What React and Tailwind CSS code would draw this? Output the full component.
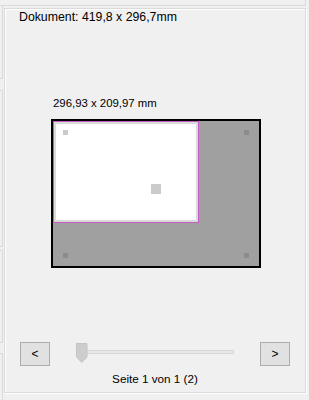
import React from 'react';

const font = { fontFamily: '"Liberation Sans", Arial, sans-serif' };

const LeftStrip = () => (
  <div className="w-[4px] flex flex-col shrink-0">
    <div className="w-[3px] h-[73px] border-r border-b border-[#dadada]" />
    <div className="h-[11px]" />
    <div className="w-[3px] h-[157px] border-r border-b border-t border-[#dadada]" />
    <div className="h-[3px]" />
    <div className="w-[3px] h-[93px] border-r border-b border-t border-[#dadada]" />
    <div className="h-[10px]" />
    <div className="w-[3px] h-[60px] border-r border-t border-[#dadada]" />
  </div>
);

const Preview = () => (
  <div className="relative w-[210px] h-[149px] border-2 border-black bg-[#a0a0a0] ml-[46px]">
    <div className="w-[146px] h-[102px] border border-[#c45ec4] bg-[#dadada] p-[2px]">
      <div className="w-full h-full bg-white" />
    </div>
    <div className="absolute left-[10px] top-[9px] w-[5px] h-[5px] bg-[#cbcbcb]" />
    <div className="absolute left-[98px] top-[63px] w-[10px] h-[10px] bg-[#cbcbcb]" />
    <div className="absolute left-[191px] top-[9px] w-[5px] h-[5px] bg-[#8c8c8c]" />
    <div className="absolute left-[10px] top-[132px] w-[5px] h-[5px] bg-[#8c8c8c]" />
    <div className="absolute left-[191px] top-[132px] w-[5px] h-[5px] bg-[#8c8c8c]" />
  </div>
);

const NavButton = ({ label }) => (
  <button className="w-[30px] h-[24px] bg-[#e1e1e1] border border-[#adadad] text-[12px] leading-none text-black flex items-center justify-center">
    {label}
  </button>
);

const Slider = () => (
  <div className="relative w-[158px] h-[24px]">
    <div className="absolute left-[1px] right-0 top-[8px] h-[4px] bg-[#e7e7e7] border border-[#d6d6d6]" />
    <svg className="absolute left-0 top-[1px]" width="12" height="20" viewBox="0 0 12 20">
      <path d="M0.5 0.5 H11 V14 L5.75 19.5 L0.5 14 Z" fill="#cdcdcd" stroke="#c4c4c4" />
    </svg>
  </div>
);

export default function App() {
  return (
    <div className="w-[309px] h-[400px] bg-[#f0f0f0] overflow-hidden text-black" style={font}>
      <div className="w-[306px] h-[6px] border-b border-r border-[#dadada]" />
      <div className="flex">
        <LeftStrip />
        <div className="mt-[2px] w-[302px] h-[385px] border border-[#dadada] shadow-[inset_1px_1px_0_#ffffff,1px_1px_0_#ffffff] flex flex-col">
          <div className="pl-[14px] pt-[1px] h-[16px] text-[12.3px] leading-[15px]">Dokument: 419,8 x 296,7mm</div>
          <div className="mt-[71px] pl-[48px] h-[15px] text-[11.4px] leading-[15px]">296,93 x 209,97 mm</div>
          <div className="mt-[8px]">
            <Preview />
          </div>
          <div className="mt-[74px] flex items-center px-[15px]">
            <NavButton label="<" />
            <div className="ml-[26px]">
              <Slider />
            </div>
            <div className="flex-1" />
            <NavButton label=">" />
          </div>
          <div className="mt-[5px] h-[15px] text-center text-[11.7px] leading-[15px]">Seite 1 von 1 (2)</div>
        </div>
      </div>
    </div>
  );
}
